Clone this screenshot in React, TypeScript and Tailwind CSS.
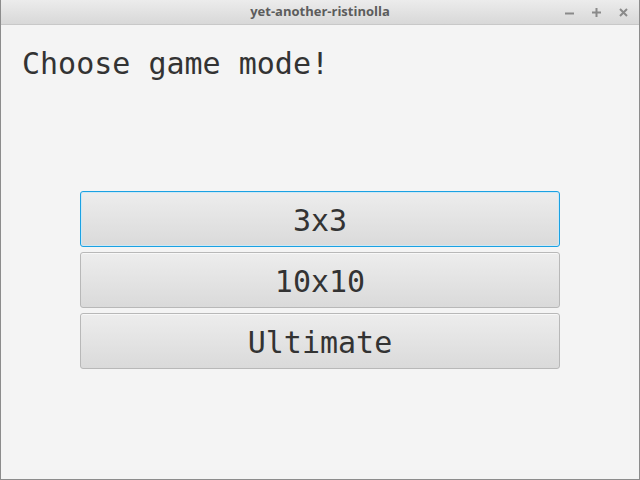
export default function App() {
  const modes = ["3x3", "10x10", "Ultimate"];

  return (
    <div className="flex h-[480px] w-[640px] flex-col border border-t-0 border-[#8c8c8c] bg-[#f4f4f4]">
      <header className="relative flex h-[25px] shrink-0 items-center justify-center border-b border-[#c8c8c8] bg-gradient-to-b from-[#ececec] to-[#d8d8d8]">
        <span className="font-['Open_Sans','Noto_Sans',sans-serif] text-[13px] font-bold text-[#5c5c5c]">
          yet-another-ristinolla
        </span>
        <div className="absolute right-[11px] top-0 flex h-full items-center gap-[18px] text-[#8a8a8a]">
          <svg width="9" height="9" viewBox="0 0 9 9">
            <rect x="0" y="4.5" width="9" height="2" fill="currentColor" />
          </svg>
          <svg width="9" height="9" viewBox="0 0 9 9">
            <rect x="0" y="3.5" width="9" height="2" fill="currentColor" />
            <rect x="3.5" y="0" width="2" height="9" fill="currentColor" />
          </svg>
          <svg width="9" height="9" viewBox="0 0 9 9">
            <path d="M1 1 L8 8 M8 1 L1 8" stroke="currentColor" strokeWidth="2" />
          </svg>
        </div>
      </header>

      <main className="flex flex-1 flex-col font-['DejaVu_Sans_Mono',monospace] text-[#333333]">
        <h1 className="ml-[21px] mt-[21px] text-[30px] leading-[36px]">Choose game mode!</h1>

        <div className="ml-[79px] mt-[109px] flex w-[480px] flex-col gap-[5px]">
          {modes.map((m, i) => (
            <button
              key={m}
              className={
                i === 0
                  ? "h-[56px] rounded-[3px] border border-[#1ba1e2] bg-gradient-to-b from-[#ededed] to-[#dadada] pt-[2px] text-[30px] text-[#333333] shadow-[inset_0_0_0_1px_#cde8f5]"
                  : "h-[56px] rounded-[3px] border border-[#b8b8b8] bg-gradient-to-b from-[#ededed] to-[#dadada] pt-[2px] text-[30px] text-[#333333] shadow-[inset_0_1px_0_#f8f8f8]"
              }
            >
              {m}
            </button>
          ))}
        </div>
      </main>
    </div>
  );
}
